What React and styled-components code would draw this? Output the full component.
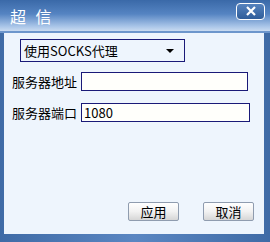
import React from 'react';
import styled, { createGlobalStyle } from 'styled-components';

const Global = createGlobalStyle`
  html, body { margin: 0; padding: 0; }
  body {
    width: 270px;
    height: 242px;
    overflow: hidden;
    font-family: "Noto Sans CJK SC", "DejaVu Sans", sans-serif;
  }
`;

const Frame = styled.div`
  width: 270px;
  height: 242px;
  display: flex;
  flex-direction: column;
  background: linear-gradient(90deg, #3f6ba6, #5a86c2 50%, #3f6ba6);
  box-sizing: border-box;
`;

const TitleBar = styled.div`
  height: 31px;
  display: flex;
  align-items: center;
  justify-content: space-between;
  padding: 0 5px 0 10px;
  background: linear-gradient(#3a69a8 0%, #5584c2 45%, #a9c5e8 85%, #c9dbf1 100%);
  border-bottom: 2px solid #6d96cc;
`;

const Title = styled.div`
  color: #ffffff;
  font-size: 16px;
  letter-spacing: 1px;
  word-spacing: 4px;
`;

const CloseBtn = styled.div`
  width: 27px;
  height: 15px;
  margin-top: -9px;
  border: 1px solid #ffffff;
  border-radius: 4px;
  background: linear-gradient(#5683be, #2f5d9a);
  display: flex;
  align-items: center;
  justify-content: center;
`;

const Body = styled.div`
  flex: 1;
  display: flex;
  flex-direction: column;
  margin: 0 6px 8px 4px;
  background: #eef5fd;
  padding: 6px 0 0 8px;
`;

const Select = styled.div`
  width: 150px;
  height: 21px;
  margin-left: 8px;
  border: 1px solid #1a1a78;
  display: flex;
  align-items: center;
  justify-content: space-between;
  padding: 0 10px 0 3px;
  font-size: 13px;
  color: #000;
  box-sizing: content-box;
`;

const Arrow = styled.span`
  width: 0;
  height: 0;
  border-left: 4px solid transparent;
  border-right: 4px solid transparent;
  border-top: 4px solid #000;
`;

const Row = styled.div`
  display: flex;
  align-items: center;
  margin-top: ${p => p.top}px;
`;

const Label = styled.div`
  width: 69px;
  font-size: 13px;
  color: #000;
`;

const Input = styled.div`
  width: ${p => p.w}px;
  height: 17px;
  border: 1px solid #1a1a78;
  background: #fffffb;
  font-size: 13px;
  line-height: 17px;
  padding-left: 2px;
  color: #000;
`;

const Spacer = styled.div`
  flex: 1;
`;

const Buttons = styled.div`
  display: flex;
  justify-content: flex-end;
  gap: 24px;
  padding-right: 10px;
  margin-bottom: 13px;
`;

const Button = styled.div`
  width: 49px;
  height: 17px;
  border: 1px solid #8f9caf;
  border-radius: 2px;
  background: linear-gradient(#ffffff 0%, #f2f2f2 50%, #d6d6d6 100%);
  font-size: 13px;
  display: flex;
  align-items: center;
  justify-content: center;
  color: #000;
`;

export default function App() {
  return (
    <>
      <Global />
      <Frame>
        <TitleBar>
          <Title>超 信</Title>
          <CloseBtn>
            <svg width="12" height="10" viewBox="0 0 12 10">
              <path d="M2 1 L10 9 M10 1 L2 9" stroke="#fff" strokeWidth="2.2" />
            </svg>
          </CloseBtn>
        </TitleBar>
        <Body>
          <Select>
            <span>使用SOCKS代理</span>
            <Arrow />
          </Select>
          <Row top={10}>
            <Label>服务器地址</Label>
            <Input w={163} />
          </Row>
          <Row top={12}>
            <Label>服务器端口</Label>
            <Input w={165}>1080</Input>
          </Row>
          <Spacer />
          <Buttons>
            <Button>应用</Button>
            <Button>取消</Button>
          </Buttons>
        </Body>
      </Frame>
    </>
  );
}
